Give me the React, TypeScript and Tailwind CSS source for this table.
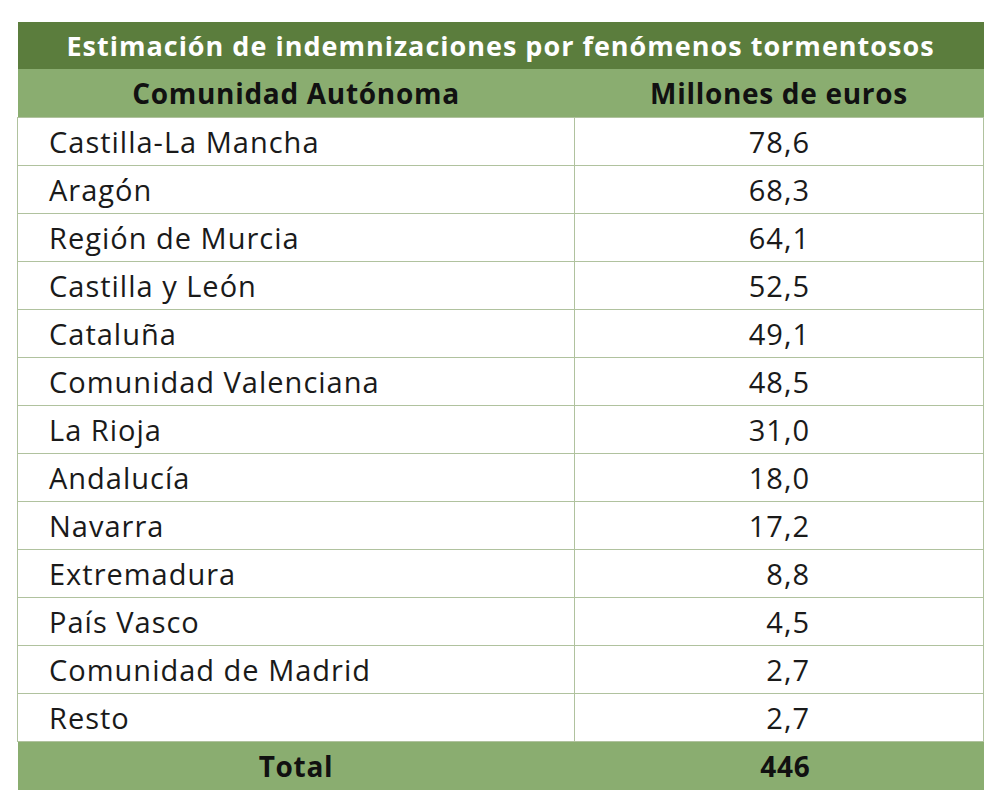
const rows = [
  { name: "Castilla-La Mancha", value: "78,6" },
  { name: "Aragón", value: "68,3" },
  { name: "Región de Murcia", value: "64,1" },
  { name: "Castilla y León", value: "52,5" },
  { name: "Cataluña", value: "49,1" },
  { name: "Comunidad Valenciana", value: "48,5" },
  { name: "La Rioja", value: "31,0" },
  { name: "Andalucía", value: "18,0" },
  { name: "Navarra", value: "17,2" },
  { name: "Extremadura", value: "8,8" },
  { name: "País Vasco", value: "4,5" },
  { name: "Comunidad de Madrid", value: "2,7" },
  { name: "Resto", value: "2,7" },
];

export default function App() {
  return (
    <div className="w-[1000px] h-[812px] bg-white pt-[22px] pl-[17px] font-['Open_Sans',sans-serif]">
      <table className="w-[966px] border-collapse table-fixed">
        <colgroup>
          <col className="w-[557px]" />
          <col className="w-[409px]" />
        </colgroup>
        <thead>
          {/* Title */}
          <tr className="h-[47px] bg-[#5b7d3d]">
            <th colSpan={2} className="text-center text-white text-[27px] font-bold tracking-[1px] leading-none">
              Estimación de indemnizaciones por fenómenos tormentosos
            </th>
          </tr>
          <tr className="h-[48px] bg-[#8aad70]">
            <th className="text-center text-[28px] font-bold tracking-[0.7px] leading-none text-[#111]">Comunidad Autónoma</th>
            <th className="text-center text-[28px] font-bold tracking-[0.7px] leading-none text-[#111]">Millones de euros</th>
          </tr>
        </thead>
        <tbody>
          {rows.map((r) => (
            <tr key={r.name} className="h-[48px]">
              <td className="border border-[#b0c29e] pl-[31px] text-[29px] tracking-[1px] leading-none text-[#1a1a1a]">{r.name}</td>
              <td className="border border-[#b0c29e] pr-[173px] text-right text-[29px] tracking-[1px] leading-none text-[#1a1a1a]">{r.value}</td>
            </tr>
          ))}
          <tr className="h-[49px] bg-[#8aad70]">
            <td className="text-center text-[28px] font-bold tracking-[0.7px] leading-none text-[#111]">Total</td>
            <td className="pr-[173px] text-right text-[28px] font-bold tracking-[0.7px] leading-none text-[#111]">446</td>
          </tr>
        </tbody>
      </table>
    </div>
  );
}
